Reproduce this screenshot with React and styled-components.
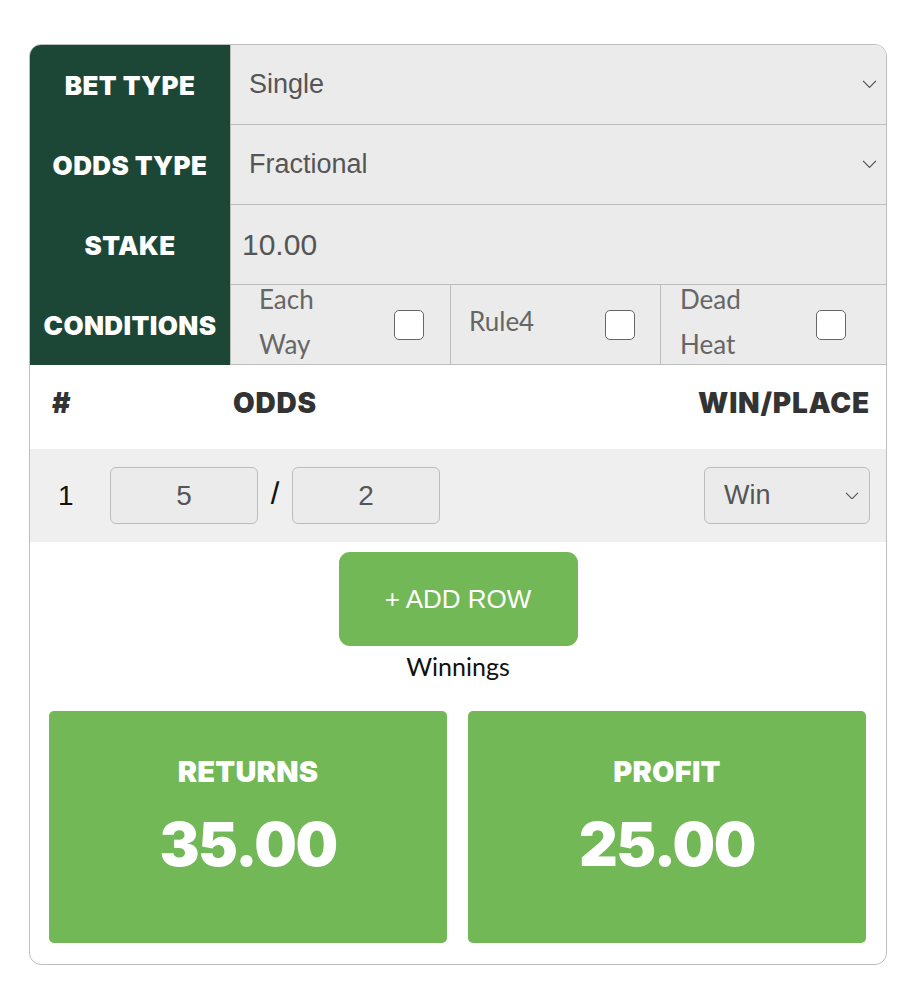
import React from "react";
import styled, { createGlobalStyle } from "styled-components";

const Global = createGlobalStyle`
  html, body { margin: 0; padding: 0; background: #fff; }
  body { font-family: "Liberation Sans", Arial, sans-serif; }
  * { box-sizing: border-box; }
`;

const HEAVY = `"Inter", "Lato", sans-serif`;

const Page = styled.div`
  padding: 44px 29px 35px 29px;
`;

const Card = styled.div`
  border: 1.5px solid #bdbdbd;
  border-radius: 12px;
  overflow: hidden;
  background: #fff;
`;

const FormGrid = styled.div`
  display: grid;
  grid-template-columns: 200px 1fr;
  grid-auto-rows: 80px;
`;

const Label = styled.div`
  background: #1c4736;
  color: #fff;
  display: flex;
  align-items: center;
  justify-content: center;
  font-family: ${HEAVY};
  font-weight: 900;
  font-size: 26px;
  letter-spacing: 0.4px;
  white-space: nowrap;
`;

const Field = styled.div`
  background: #ebebeb;
  border-bottom: 1.5px solid #bdbdbd;
  border-left: 1.5px solid #bdbdbd;
  display: flex;
  align-items: center;
  justify-content: space-between;
  padding: 0 ${(p) => p.$pr || 0}px 0 ${(p) => p.$pl || 18}px;
  color: #555;
  font-size: ${(p) => p.$fs || 27}px;
`;

const Chevron = ({ size = 15 }) => (
  <svg width={size} height={size * 0.55} viewBox="0 0 16 9" fill="none">
    <path d="M1 1l7 7 7-7" stroke="#555" strokeWidth="1.4" />
  </svg>
);

const CondRow = styled.div`
  display: grid;
  grid-template-columns: 219px 210px 1fr;
  grid-template-rows: 100%;
  height: 80px;
  background: #ebebeb;
  border-bottom: 1.5px solid #bdbdbd;
  border-left: 1.5px solid #bdbdbd;
`;

const Cond = styled.div`
  display: flex;
  align-items: center;
  justify-content: space-between;
  min-height: 0;
  padding: 0 ${(p) => p.$pr}px 0 ${(p) => p.$pl}px;
  border-left: ${(p) => (p.$first ? "none" : "1.5px solid #bdbdbd")};
  font-family: "Lato", sans-serif;
  font-size: 26px;
  line-height: 45px;
  color: #666;
`;

const CondText = styled.span`
  display: block;
  margin-top: -6px;
`;

const Check = styled.span`
  width: 30px;
  height: 30px;
  border: 1.5px solid #666;
  border-radius: 5px;
  background: #fff;
  flex-shrink: 0;
`;

const OddsGrid = styled.div`
  display: grid;
  grid-template-columns: 80px 330px 1fr 166px;
  align-items: center;
  padding-right: 16px;
  padding-bottom: ${(p) => p.$pb || 0}px;
  height: ${(p) => p.$h}px;
  background: ${(p) => p.$bg || "#fff"};
`;

const HeadCell = styled.div`
  display: flex;
  justify-content: ${(p) => p.$justify || "flex-start"};
  font-family: ${HEAVY};
  font-weight: 900;
  font-size: 28px;
  letter-spacing: 0.8px;
  color: #333;
  white-space: nowrap;
  padding-left: ${(p) => p.$pl || 0}px;
`;

const Num = styled.div`
  font-size: 28px;
  color: #111;
  padding-left: 28px;
`;

const Fraction = styled.div`
  display: flex;
  align-items: center;
  justify-content: space-between;
`;

const OddsInput = styled.div`
  width: 148px;
  height: 57px;
  border: 1.5px solid #bdbdbd;
  border-radius: 6px;
  background: #ebebeb;
  display: flex;
  align-items: center;
  justify-content: center;
  font-size: 28px;
  color: #555;
`;

const Slash = styled.span`
  font-family: ${HEAVY};
  font-size: 26px;
  font-weight: 500;
  color: #111;
  margin-top: -8px;
`;

const SmallSelect = styled.div`
  height: 57px;
  border: 1.5px solid #bdbdbd;
  border-radius: 6px;
  background: #ebebeb;
  display: flex;
  align-items: center;
  justify-content: space-between;
  padding: 0 10px 0 19px;
  font-size: 27px;
  color: #555;
`;

const Actions = styled.div`
  display: flex;
  flex-direction: column;
  align-items: center;
  padding-top: 10px;
`;

const AddButton = styled.div`
  width: 239px;
  height: 94px;
  border-radius: 11px;
  background: #72b857;
  color: #fff;
  font-size: 26px;
  display: flex;
  align-items: center;
  justify-content: center;
`;

const Winnings = styled.div`
  font-family: "Lato", sans-serif;
  font-size: 25px;
  color: #111;
  line-height: 30px;
  margin-top: 5px;
`;

const Results = styled.div`
  display: grid;
  grid-template-columns: 1fr 1fr;
  gap: 21px;
  padding: 30px 20px 21px 19px;
`;

const ResultBox = styled.div`
  height: 232px;
  background: #72b857;
  border-radius: 5px;
  color: #fff;
  display: flex;
  flex-direction: column;
  align-items: center;
  padding-top: 46px;
  font-family: ${HEAVY};
  font-weight: 900;
`;

const ResultLabel = styled.div`
  font-size: 29px;
  line-height: 30px;
  letter-spacing: 0.2px;
`;

const ResultValue = styled.div`
  font-size: 60px;
  line-height: 70px;
  margin-top: 22px;
  letter-spacing: -1.5px;
`;

export default function App() {
  return (
    <Page>
      <Global />
      <Card>
        <FormGrid>
          <Label>BET TYPE</Label>
          <Field $pr={9}>
            Single
            <Chevron />
          </Field>
          <Label>ODDS TYPE</Label>
          <Field $pr={9}>
            Fractional
            <Chevron />
          </Field>
          <Label>STAKE</Label>
          <Field $pl={11} $fs={30}>
            10.00
          </Field>
          <Label>CONDITIONS</Label>
          <CondRow>
            <Cond $first $pl={28} $pr={26}>
              <CondText>
                Each
                <br />
                Way
              </CondText>
              <Check />
            </Cond>
            <Cond $pl={18} $pr={25}>
              <CondText>Rule4</CondText>
              <Check />
            </Cond>
            <Cond $pl={19} $pr={40}>
              <CondText>
                Dead
                <br />
                Heat
              </CondText>
              <Check />
            </Cond>
          </CondRow>
        </FormGrid>
        <OddsGrid $h={84} $pb={8}>
          <HeadCell $pl={22}>#</HeadCell>
          <HeadCell $justify="center">ODDS</HeadCell>
          <div />
          <HeadCell $justify="flex-end">WIN/PLACE</HeadCell>
        </OddsGrid>
        <OddsGrid $h={93} $bg="#efefef">
          <Num>1</Num>
          <Fraction>
            <OddsInput>5</OddsInput>
            <Slash>/</Slash>
            <OddsInput>2</OddsInput>
          </Fraction>
          <div />
          <SmallSelect>
            Win
            <Chevron size={14} />
          </SmallSelect>
        </OddsGrid>
        <Actions>
          <AddButton>+ ADD ROW</AddButton>
          <Winnings>Winnings</Winnings>
        </Actions>
        <Results>
          <ResultBox>
            <ResultLabel>RETURNS</ResultLabel>
            <ResultValue>35.00</ResultValue>
          </ResultBox>
          <ResultBox>
            <ResultLabel>PROFIT</ResultLabel>
            <ResultValue>25.00</ResultValue>
          </ResultBox>
        </Results>
      </Card>
    </Page>
  );
}
